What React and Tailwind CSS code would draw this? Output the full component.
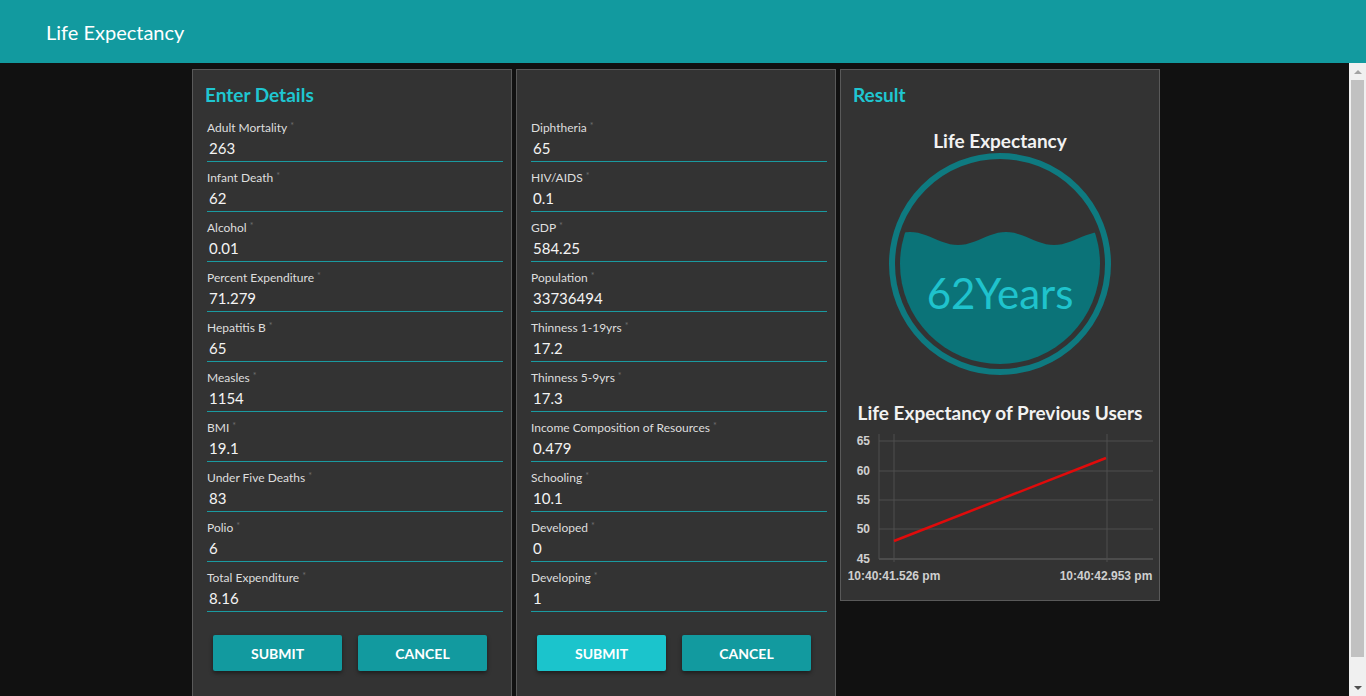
const leftFields = [
  ["Adult Mortality", "263"],
  ["Infant Death", "62"],
  ["Alcohol", "0.01"],
  ["Percent Expenditure", "71.279"],
  ["Hepatitis B", "65"],
  ["Measles", "1154"],
  ["BMI", "19.1"],
  ["Under Five Deaths", "83"],
  ["Polio", "6"],
  ["Total Expenditure", "8.16"],
];

const rightFields = [
  ["Diphtheria", "65"],
  ["HIV/AIDS", "0.1"],
  ["GDP", "584.25"],
  ["Population", "33736494"],
  ["Thinness 1-19yrs", "17.2"],
  ["Thinness 5-9yrs", "17.3"],
  ["Income Composition of Resources", "0.479"],
  ["Schooling", "10.1"],
  ["Developed", "0"],
  ["Developing", "1"],
];

function Field({ label, value }) {
  return (
    <div className="mt-[8px] first:mt-0">
      <div className="h-[16px] text-[12px] leading-[16px] text-[#dedede]">
        {label}
        <span className="ml-[3px] align-top text-[9px] leading-[12px] text-[#6f6f6f]">*</span>
      </div>
      <div className="h-[26px] border-b border-[#1a9aa0] pl-[2px] text-[15px] leading-[25px] text-[#f4f4f4]">
        {value}
      </div>
    </div>
  );
}

function FormPanel({ title, fields, hoverSubmit }) {
  return (
    <section className="w-[320px] shrink-0 border border-[#595959] bg-[#333333] pl-[14px] pr-[8px] pt-[13px] pb-[40px]">
      <h2 className="-ml-[2px] mb-[13px] h-[24px] text-[19px] font-bold leading-[24px] text-[#1fc6d1]">{title}</h2>
      <div>
        {fields.map(([l, v]) => (
          <Field key={l} label={l} value={v} />
        ))}
      </div>
      <div className="mt-[23px] flex gap-[16px] pl-[6px]">
        <button
          className={
            hoverSubmit
              ? "h-[36px] w-[129px] rounded-[2px] bg-[#1bc4cc] text-[14px] font-bold text-white shadow-[0_2px_4px_rgba(0,0,0,0.45)]"
              : "h-[36px] w-[129px] rounded-[2px] bg-[#129a9f] text-[14px] font-bold text-white shadow-[0_2px_4px_rgba(0,0,0,0.45)]"
          }
        >
          SUBMIT
        </button>
        <button className="h-[36px] w-[129px] rounded-[2px] bg-[#129a9f] text-[14px] font-bold text-white shadow-[0_2px_4px_rgba(0,0,0,0.45)]">
          CANCEL
        </button>
      </div>
    </section>
  );
}

function wavePath() {
  const y = (x) => 88.5 - 6.5 * Math.cos((2 * Math.PI * (x - 120)) / 96);
  let d = `M0 228 L0 ${y(0).toFixed(2)}`;
  for (let x = 4; x <= 228; x += 4) d += ` L${x} ${y(x).toFixed(2)}`;
  return d + " L228 228 Z";
}

function Gauge() {
  return (
    <svg width="228" height="228" viewBox="0 0 228 228" className="-mt-[3px] block">
      <defs>
        <clipPath id="inner">
          <circle cx="114" cy="114" r="100" />
        </clipPath>
      </defs>
      <circle cx="114" cy="114" r="108" fill="none" stroke="#0e7a80" strokeWidth="6" />
      <path d={wavePath()} fill="#0b7378" clipPath="url(#inner)" />
      <text
        x="114"
        y="143"
        textAnchor="middle"
        dominantBaseline="central"
        fontSize="42"
        fill="#1fc3cd"
        fontFamily="Lato, 'Open Sans', sans-serif"
      >
        62Years
      </text>
    </svg>
  );
}

function Chart() {
  const rows = [
    ["65", 11],
    ["60", 41],
    ["55", 70],
    ["50", 99],
    ["45", 129],
  ];
  const font = "'Liberation Sans', Arial, sans-serif";
  return (
    <svg width="310" height="155" viewBox="0 0 310 155" className="ml-[7px] block">
      {rows.slice(0, 4).map(([, y]) => (
        <line key={y} x1="31" x2="305" y1={y} y2={y} stroke="#4f4f4f" strokeWidth="1" />
      ))}
      <line x1="31" x2="305" y1="129" y2="129" stroke="#666" strokeWidth="1" />
      <line x1="31" x2="31" y1="4" y2="129" stroke="#4f4f4f" strokeWidth="1" />
      <line x1="46" x2="46" y1="4" y2="132" stroke="#4f4f4f" strokeWidth="1" />
      <line x1="259" x2="259" y1="4" y2="132" stroke="#4f4f4f" strokeWidth="1" />
      {rows.map(([t, y]) => (
        <text key={t} x="22" y={y} textAnchor="end" dominantBaseline="central" fontSize="12" fontWeight="bold" fill="#cfcfcf" fontFamily={font}>
          {t}
        </text>
      ))}
      <line x1="46" y1="111" x2="258" y2="28" stroke="#e00b0b" strokeWidth="2.5" />
      <text x="46" y="146" textAnchor="middle" dominantBaseline="central" fontSize="12" fontWeight="bold" fill="#cfcfcf" fontFamily={font}>
        10:40:41.526 pm
      </text>
      <text x="258" y="146" textAnchor="middle" dominantBaseline="central" fontSize="12" fontWeight="bold" fill="#cfcfcf" fontFamily={font}>
        10:40:42.953 pm
      </text>
    </svg>
  );
}

function ResultPanel() {
  return (
    <section className="flex h-[532px] w-[320px] shrink-0 flex-col border border-[#595959] bg-[#333333] pt-[13px]">
      <h2 className="mb-[22px] h-[24px] pl-[12px] text-[19px] font-bold leading-[24px] text-[#1fc6d1]">Result</h2>
      <div className="h-[24px] text-center text-[19px] font-bold leading-[24px] text-[#f2f2f2]">Life Expectancy</div>
      <div className="flex justify-center">
        <Gauge />
      </div>
      <div className="mt-[23px] h-[24px] text-center text-[19px] font-bold leading-[24px] text-[#f2f2f2]">
        Life Expectancy of Previous Users
      </div>
      <div className="mt-[5px]">
        <Chart />
      </div>
    </section>
  );
}

function Scrollbar() {
  return (
    <div className="flex w-[17px] shrink-0 flex-col items-center bg-[#f0f0f0]">
      <div className="flex h-[17px] w-full items-center justify-center">
        <div className="h-0 w-0 border-x-[4px] border-b-[4px] border-x-transparent border-b-[#a3a3a3]" />
      </div>
      <div className="w-[13px] flex-1 bg-[#c1c1c1]" />
      <div className="mt-[22px] flex h-[17px] w-full items-center justify-center">
        <div className="h-0 w-0 border-x-[4px] border-t-[4px] border-x-transparent border-t-[#505050]" />
      </div>
    </div>
  );
}

export default function App() {
  return (
    <div className="flex h-[696px] flex-col overflow-hidden bg-[#111111] font-['Segoe_UI','Lato',sans-serif]">
      <header className="flex h-[63px] shrink-0 items-center bg-[#129a9f] pl-[46px]">
        <h1 className="text-[20px] text-white">Life Expectancy</h1>
      </header>
      <div className="flex min-h-0 flex-1">
        <main className="min-w-0 flex-1 overflow-hidden">
          <div className="flex items-start gap-[4px] pl-[192px] pt-[6px]">
            <FormPanel title="Enter Details" fields={leftFields} />
            <FormPanel title="" fields={rightFields} hoverSubmit />
            <ResultPanel />
          </div>
        </main>
        <Scrollbar />
      </div>
    </div>
  );
}
